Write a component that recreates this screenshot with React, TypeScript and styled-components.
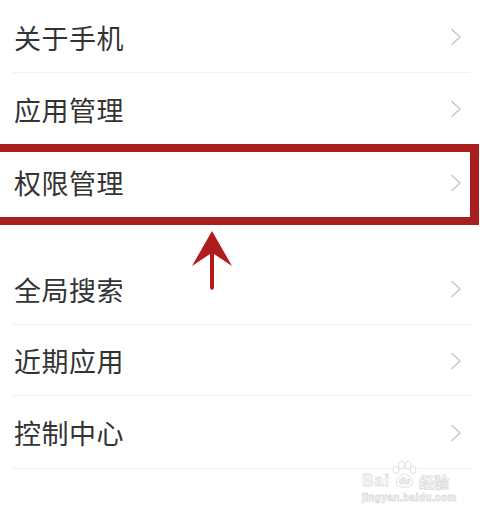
import React from 'react';
import styled, { createGlobalStyle } from 'styled-components';

const GlobalStyle = createGlobalStyle`
  html, body {
    margin: 0;
    padding: 0;
    background: #ffffff;
  }
  body {
    font-family: "Noto Sans CJK SC", "Noto Sans", sans-serif;
  }
`;

const Page = styled.div`
  position: relative;
  width: 480px;
  height: 516px;
  overflow: hidden;
  background: #ffffff;
  padding-top: 1px;
  box-sizing: border-box;
`;

const Group = styled.div`
  position: relative;
  display: flex;
  flex-direction: column;
`;

const Spacer = styled.div`
  height: 33px;
`;

const Row = styled.div<{ $highlight?: boolean; $h: number }>`
  position: relative;
  height: ${({ $h }) => $h}px;
  display: flex;
  align-items: center;
  justify-content: space-between;
  padding: 0 14px 0 14px;

  &::before {
    content: '';
    position: absolute;
    left: 13px;
    right: 10px;
    bottom: 0;
    height: 1px;
    background: #f1f1f1;
  }

  ${({ $highlight }) =>
    $highlight &&
    `
    &::after {
      content: '';
      position: absolute;
      left: -12px;
      right: 1px;
      top: -1px;
      bottom: -5px;
      border: 8px solid #a91f1f;
      border-right-width: 9px;
      pointer-events: none;
    }
  `}
`;

const Label = styled.span`
  font-size: 27px;
  line-height: 1;
  color: #333333;
  letter-spacing: 0.5px;
`;

const Chevron = styled.svg`
  width: 12px;
  height: 18px;
  margin-right: 4px;
  flex-shrink: 0;
`;

const ArrowMark = styled.svg`
  position: absolute;
  left: 190px;
  top: -23px;
  width: 44px;
  height: 62px;
  pointer-events: none;
`;

const Watermark = styled.div`
  position: absolute;
  left: 362px;
  top: 460px;
  display: flex;
  flex-direction: column;
  align-items: flex-start;
  color: #ffffff;
  -webkit-text-stroke: 0.8px #dcdcdc;
  font-family: "Liberation Sans", Arial, sans-serif;
  pointer-events: none;
`;

const MarkTop = styled.div`
  display: flex;
  align-items: flex-end;
  gap: 1px;
  height: 30px;
`;

const MarkBai = styled.span`
  font-size: 16px;
  font-weight: 700;
  letter-spacing: 1px;
  line-height: 1;
  margin-bottom: 1px;
`;

const MarkCn = styled.span`
  font-family: "Noto Sans CJK SC", sans-serif;
  font-size: 15px;
  font-weight: 700;
  line-height: 1;
  margin-bottom: 1px;
`;

const MarkUrl = styled.span`
  font-size: 10px;
  font-weight: 700;
  letter-spacing: 0.4px;
  margin-top: 2px;
`;

const ChevronIcon = () => (
  <Chevron viewBox="0 0 12 18">
    <path d="M2 1.5 L10 9 L2 16.5" fill="none" stroke="#c9c9c9" strokeWidth="1.6" strokeLinecap="round" strokeLinejoin="round" />
  </Chevron>
);

const Paw = () => (
  <svg width="27" height="30" viewBox="0 0 27 30">
    <g fill="#fff" stroke="#dcdcdc" strokeWidth="0.9">
      <ellipse cx="5" cy="10" rx="3" ry="3.6" />
      <ellipse cx="10.5" cy="5" rx="3" ry="3.8" />
      <ellipse cx="17" cy="5" rx="3" ry="3.8" />
      <ellipse cx="22" cy="10" rx="3" ry="3.6" />
      <path d="M6 25 C4 20 9 14 13.5 14 C18 14 23 20 21 25 C19 28 8 28 6 25 Z" />
    </g>
    <text x="13.5" y="24" textAnchor="middle" fontSize="9" fontWeight="700" fill="#fff" stroke="#dcdcdc" strokeWidth="0.7" fontFamily="Liberation Sans, sans-serif">du</text>
  </svg>
);

const firstGroup = [
  { label: '关于手机', h: 72 },
  { label: '应用管理', h: 72 },
  { label: '权限管理', h: 75, highlight: true },
];

const secondGroup = [
  { label: '全局搜索', h: 72 },
  { label: '近期应用', h: 71 },
  { label: '控制中心', h: 73 },
];

const App: React.FC = () => {
  return (
    <Page>
      <GlobalStyle />
      <Group>
        {firstGroup.map((item) => (
          <Row key={item.label} $h={item.h} $highlight={item.highlight}>
            <Label>{item.label}</Label>
            <ChevronIcon />
          </Row>
        ))}
      </Group>
      <Spacer />
      <Group>
        <ArrowMark viewBox="0 0 44 62">
          <path d="M22 1 L42 36 L24 24 L24 58 Q22 62 20 58 L20 24 L2 36 Z" fill="#b01c1c" />
        </ArrowMark>
        {secondGroup.map((item) => (
          <Row key={item.label} $h={item.h}>
            <Label>{item.label}</Label>
            <ChevronIcon />
          </Row>
        ))}
      </Group>
      <Watermark>
        <MarkTop>
          <MarkBai>Bai</MarkBai>
          <Paw />
          <MarkCn>经验</MarkCn>
        </MarkTop>
        <MarkUrl>jingyan.baidu.com</MarkUrl>
      </Watermark>
    </Page>
  );
};

export default App;
